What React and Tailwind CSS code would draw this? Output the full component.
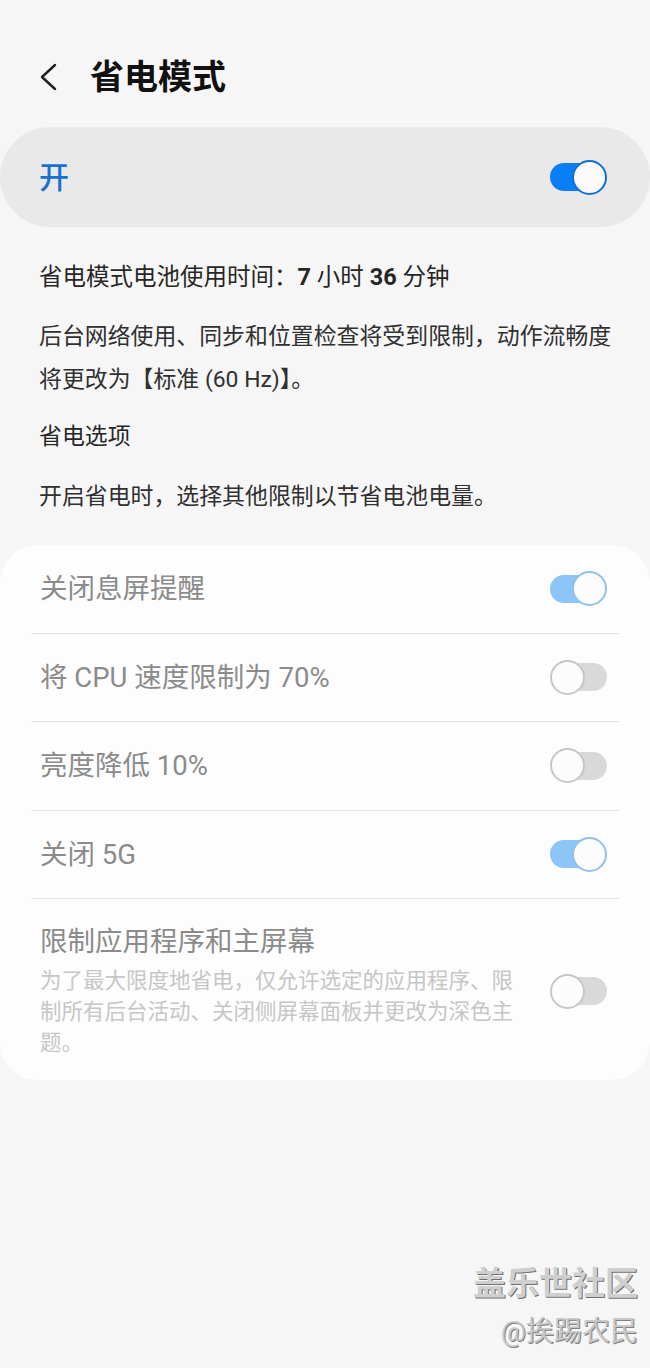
import { useState } from 'react'

const FONT = { fontFamily: 'Roboto, "Noto Sans CJK SC", sans-serif' }

function Toggle({ on, tone = 'active' }) {
  const track =
    tone === 'active'
      ? 'bg-[#0a7ef6]'
      : on
        ? 'bg-[#8dc5f8]'
        : 'bg-[#d9d9d9]'
  const knob =
    tone === 'active'
      ? 'border-[#0c70d8] bg-[#fbfbfb]'
      : on
        ? 'border-[#8fc1ec] bg-[#fcfcfc]'
        : 'border-[#c6c6c6] bg-[#fcfcfc]'

  return (
    <div className="relative w-[57px] h-[35px] shrink-0">
      <div
        className={`absolute top-[3.5px] h-[28px] rounded-full ${track} ${on ? 'left-0 w-[50px]' : 'left-[8px] w-[49px]'}`}
      />
      <div
        className={`absolute top-0 w-[35px] h-[35px] rounded-full border-2 ${knob} ${on ? 'right-0' : 'left-0'}`}
      />
    </div>
  )
}

function Opcion({ texto, on }) {
  return (
    <div className="h-[87.5px] flex items-center justify-between pl-[40px] pr-[43px]">
      <span className="text-[27.5px] text-[#8b8b8b]">{texto}</span>
      <Toggle on={on} tone="disabled" />
    </div>
  )
}

function Divisor() {
  return <div className="mx-[31px] h-px bg-[#e4e4e4]" />
}

export default function App() {
  const [activo, setActivo] = useState(true)

  return (
    <div className="min-h-[1368px] bg-[#f6f6f6] flex flex-col" style={FONT}>
      {/* Encabezado */}
      <div className="flex items-center pt-[55px] h-[99px]">
        <svg width="20" height="30" viewBox="0 0 20 30" className="ml-[38px]">
          <polyline
            points="17,3 4,15 17,27"
            fill="none"
            stroke="#1f1f1f"
            strokeWidth="2.4"
            strokeLinecap="round"
            strokeLinejoin="round"
          />
        </svg>
        <h1 className="ml-[32px] text-[34px] leading-[44px] font-bold text-[#111]">省电模式</h1>
      </div>

      {/* Interruptor principal */}
      <div
        onClick={() => setActivo(!activo)}
        className="mt-[28px] h-[100px] rounded-full bg-[#e9e9e9] flex items-center justify-between pl-[39px] pr-[43px] cursor-pointer"
      >
        <span className="text-[30px] font-medium text-[#1a70cf]">{activo ? '开' : '关'}</span>
        <Toggle on={activo} tone="active" />
      </div>

      {/* Texto */}
      <div className="pl-[39px] pr-[20px] text-[22.9px] leading-[43px] text-[#262626]">
        <p className="mt-[29px] text-[23.5px]">
          省电模式电池使用时间：<span className="font-bold">7</span> 小时 <span className="font-bold">36</span> 分钟
        </p>
        <p className="mt-[16px] text-[#303030]">
          后台网络使用、同步和位置检查将受到限制，动作流畅度将更改为【标准 (60 Hz)】。
        </p>
        <p className="mt-[14px]">省电选项</p>
        <p className="mt-[17px] text-[#303030]">开启省电时，选择其他限制以节省电池电量。</p>
      </div>

      {/* Opciones */}
      <div className="mt-[27px] bg-[#fdfdfd] rounded-[38px]">
        <Opcion texto="关闭息屏提醒" on />
        <Divisor />
        <Opcion texto="将 CPU 速度限制为 70%" on={false} />
        <Divisor />
        <Opcion texto="亮度降低 10%" on={false} />
        <Divisor />
        <Opcion texto="关闭 5G" on />
        <Divisor />
        <div className="flex items-center justify-between pl-[40px] pr-[43px] pt-[25px] pb-[22px]">
          <div>
            <p className="text-[27.5px] leading-[36px] text-[#8b8b8b]">限制应用程序和主屏幕</p>
            <p className="mt-[5px] w-[480px] text-[21.5px] leading-[31px] text-[#c6c6c6]">
              为了最大限度地省电，仅允许选定的应用程序、限制所有后台活动、关闭侧屏幕面板并更改为深色主题。
            </p>
          </div>
          <Toggle on={false} tone="disabled" />
        </div>
      </div>

      {/* Marca de agua */}
      <div className="mt-auto pb-[16px] pr-[12px] flex flex-col items-end">
        <span className="text-[33px] leading-[40px] font-bold text-[#cfcfcf] [text-shadow:1px_1px_0_#707070]">
          盖乐世社区
        </span>
        <span className="mt-[8px] text-[28px] leading-[40px] text-[#c8c8c8] [text-shadow:1px_1px_0_#808080]">
          @挨踢农民
        </span>
      </div>
    </div>
  )
}
